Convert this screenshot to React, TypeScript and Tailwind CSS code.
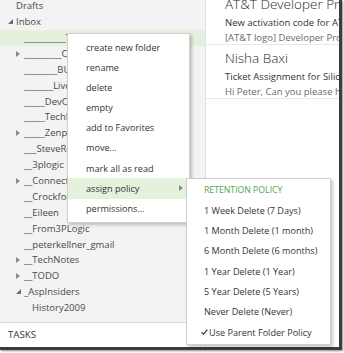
import { ReactNode } from 'react';

type Folder = {
  name: string;
  level: number;
  arrow?: 'closed' | 'open';
  selected?: boolean;
};

const FOLDERS: Folder[] = [
  { name: 'Drafts', level: 0 },
  { name: 'Inbox', level: 0, arrow: 'open' },
  { name: '__________TODO', level: 1, selected: true },
  { name: '_________Conf', level: 1, arrow: 'closed' },
  { name: '________BUGS', level: 1 },
  { name: '_______LiveW', level: 1 },
  { name: '_____DevConn', level: 1 },
  { name: '_____TechEd', level: 1 },
  { name: '_____Zenprise', level: 1, arrow: 'closed' },
  { name: '___SteveRoss', level: 1 },
  { name: '__3plogic', level: 1 },
  { name: '__Connections', level: 1, arrow: 'closed' },
  { name: '__Crockford', level: 1 },
  { name: '__Eileen', level: 1 },
  { name: '__From3PLogic', level: 1 },
  { name: '__peterkellner_gmail', level: 1 },
  { name: '__TechNotes', level: 1, arrow: 'closed' },
  { name: '__TODO', level: 1, arrow: 'closed' },
  { name: '_AspInsiders', level: 1, arrow: 'open' },
  { name: 'History2009', level: 2 },
];

const MENU_ITEMS = [
  'create new folder',
  'rename',
  'delete',
  'empty',
  'add to Favorites',
  'move...',
  'mark all as read',
  'assign policy',
  'permissions...',
];

const POLICIES = [
  '1 Week Delete (7 Days)',
  '1 Month Delete (1 month)',
  '6 Month Delete (6 months)',
  '1 Year Delete (1 Year)',
  '5 Year Delete (5 Years)',
  'Never Delete (Never)',
];

const MAILS = [
  {
    from: 'AT&T Developer Program',
    subject: 'New activation code for AT&T API Platform',
    preview: '[AT&T logo] Developer Program Registration',
  },
  {
    from: 'Nisha Baxi',
    subject: 'Ticket Assignment for Silicon Valley Code Camp',
    preview: 'Hi Peter,  Can you please help us with',
  },
];

const ClosedArrow = () => (
  <svg width="4" height="6" viewBox="0 0 4 6" className="shrink-0">
    <path d="M0 0 L4 3 L0 6 Z" fill="#8a8a8a" />
  </svg>
);

const OpenArrow = () => (
  <svg width="5" height="5" viewBox="0 0 5 5" className="shrink-0">
    <path d="M5 0 L5 5 L0 5 Z" fill="#6a6a6a" />
  </svg>
);

const FolderRow = ({ folder }: { folder: Folder }) => {
  let arrow: ReactNode = null;
  if (folder.arrow === 'open') arrow = <OpenArrow />;
  if (folder.arrow === 'closed') arrow = <ClosedArrow />;

  return (
    <div
      className={`relative flex h-[15.9px] items-center whitespace-nowrap ${
        folder.selected ? 'bg-[#e4f1dd]' : ''
      }`}
    >
      {arrow && (
        <span
          className={`absolute flex items-center ${
            folder.level === 0 ? 'left-[8px]' : 'left-[16px]'
          }`}
        >
          {arrow}
        </span>
      )}
      <span
        className={
          folder.level === 0 ? 'pl-[16px]' : folder.level === 1 ? 'pl-[24px]' : 'pl-[32px]'
        }
      >
        {folder.name}
      </span>
    </div>
  );
};

export default function App() {
  return (
    <div className="relative h-[353px] w-[344px] overflow-hidden bg-white font-['Open_Sans','Noto_Sans',sans-serif] text-[9.5px] leading-none">
      <div className="box-content flex h-[347px] w-[339px] border-r-[3px] border-b-[3px] border-[#3c3c3c] shadow-[1px_1px_2px_rgba(0,0,0,0.45)]">
        {/* folder pane */}
        <div className="flex w-[206px] shrink-0 flex-col border-r border-[#e2e2e2]">
          <div className="flex-1 overflow-hidden bg-[#f3f3f3] text-[#4a4a4a]">
            <div className="mt-[-2px]">
              {FOLDERS.map((f, i) => (
                <FolderRow key={i} folder={f} />
              ))}
            </div>
          </div>
          <div className="flex h-[25px] items-center border-t border-[#dadada] bg-white pl-[8px] pb-[1px] text-[9.7px] text-[#333]">
            TASKS
          </div>
        </div>

        {/* message list */}
        <div className="flex-1 overflow-hidden bg-white">
          <div className="mt-[-9px]">
            {MAILS.map((m) => (
              <div key={m.from} className="h-[54px] border-b border-[#e9e9e9] pt-[4px] pl-[19px] whitespace-nowrap">
                <div className="flex h-[20px] items-center text-[13.5px] font-light text-[#2a2a2a]">{m.from}</div>
                <div className="flex h-[15px] items-center text-[#333]">{m.subject}</div>
                <div className="flex h-[15px] items-center text-[#6a6a6a]">{m.preview}</div>
              </div>
            ))}
          </div>
        </div>
      </div>

      {/* context menu */}
      <div className="absolute left-[67px] top-[33px] w-[123px] border border-[#cfcfcf] bg-white pt-[3px] pb-[3px] text-[9.1px] text-[#333] shadow-[2px_2px_3px_rgba(0,0,0,0.22)]">
        {MENU_ITEMS.map((item) => {
          const active = item === 'assign policy';
          return (
            <div
              key={item}
              className={`relative flex h-[20.2px] items-center pl-[18px] whitespace-nowrap ${
                active ? 'bg-[#e4f1dd]' : ''
              }`}
            >
              {item}
              {active && (
                <span className="absolute left-[111px] flex items-center">
                  <ClosedArrow />
                </span>
              )}
            </div>
          );
        })}
      </div>

      {/* policy submenu */}
      <div className="absolute left-[186px] top-[178px] w-[145px] border border-[#cfcfcf] bg-white pt-[1px] pb-[2px] text-[9.1px] text-[#333] shadow-[2px_2px_3px_rgba(0,0,0,0.22)]">
        <div className="flex h-[20.3px] items-center pl-[17px] text-[8.7px] text-[#52a452]">RETENTION POLICY</div>
        {POLICIES.map((p) => (
          <div key={p} className="flex h-[20.3px] items-center pl-[17px] whitespace-nowrap">
            {p}
          </div>
        ))}
        <div className="flex h-[20.3px] items-center pl-[14px] whitespace-nowrap">
          <svg width="7" height="6" viewBox="0 0 7 6" className="mr-[1px] shrink-0">
            <path d="M0.6 3.2 L2.6 5.2 L6.4 0.6" fill="none" stroke="#444" strokeWidth="1.3" />
          </svg>
          Use Parent Folder Policy
        </div>
      </div>
    </div>
  );
}
